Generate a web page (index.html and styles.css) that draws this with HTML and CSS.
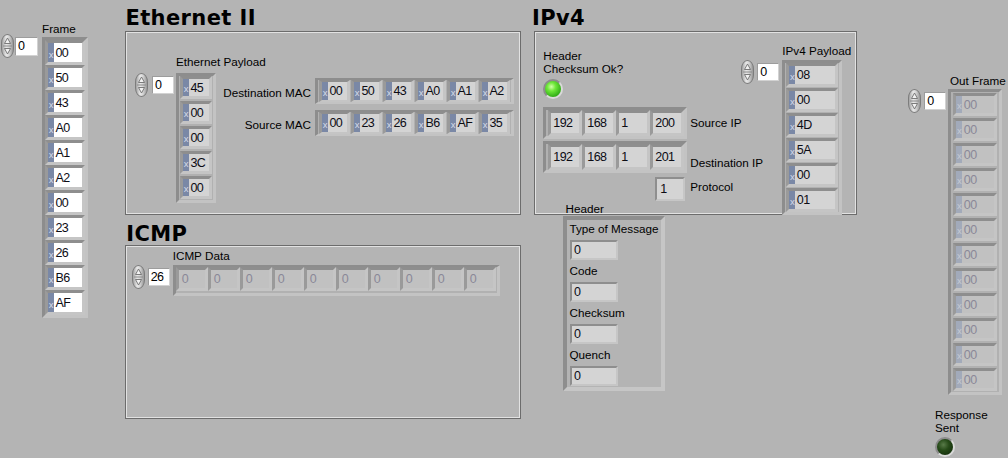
FILE: index.html
```html
<!DOCTYPE html>
<html>
<head>
<meta charset="utf-8">
<link rel="stylesheet" href="styles.css">
</head>
<body>
<div class="panel">

  <!-- Frame array -->
  <div class="obj aobj frame-obj">
    <div class="lbl">Frame</div>
    <div class="idx">
      <div class="spin"><svg width="11" height="22" viewBox="0 0 11 22"><path d="M5.5 3 8.5 8.5H2.5Z" fill="#f2f2f2" stroke="#6e6e6e" stroke-width=".9" stroke-linejoin="round"/><path d="M1 11H10" stroke="#8c8c8c"/><path d="M5.5 19 8.5 13.5H2.5Z" fill="#f2f2f2" stroke="#6e6e6e" stroke-width=".9" stroke-linejoin="round"/></svg></div>
      <div class="ibox">0</div>
    </div>
    <div class="arr v a-frame">
      <div class="slot"><div class="cell ctl"><span class="x">x</span><span class="val">00</span></div></div>
      <div class="slot"><div class="cell ctl"><span class="x">x</span><span class="val">50</span></div></div>
      <div class="slot"><div class="cell ctl"><span class="x">x</span><span class="val">43</span></div></div>
      <div class="slot"><div class="cell ctl"><span class="x">x</span><span class="val">A0</span></div></div>
      <div class="slot"><div class="cell ctl"><span class="x">x</span><span class="val">A1</span></div></div>
      <div class="slot"><div class="cell ctl"><span class="x">x</span><span class="val">A2</span></div></div>
      <div class="slot"><div class="cell ctl"><span class="x">x</span><span class="val">00</span></div></div>
      <div class="slot"><div class="cell ctl"><span class="x">x</span><span class="val">23</span></div></div>
      <div class="slot"><div class="cell ctl"><span class="x">x</span><span class="val">26</span></div></div>
      <div class="slot"><div class="cell ctl"><span class="x">x</span><span class="val">B6</span></div></div>
      <div class="slot"><div class="cell ctl"><span class="x">x</span><span class="val">AF</span></div></div>
    </div>
  </div>

  <!-- Ethernet II -->
  <div class="title t-eth">Ethernet II</div>
  <div class="box eth">
    <div class="aobj epay">
      <div class="lbl">Ethernet Payload</div>
      <div class="idx">
        <div class="spin"><svg width="11" height="22" viewBox="0 0 11 22"><path d="M5.5 3 8.5 8.5H2.5Z" fill="#f2f2f2" stroke="#6e6e6e" stroke-width=".9" stroke-linejoin="round"/><path d="M1 11H10" stroke="#8c8c8c"/><path d="M5.5 19 8.5 13.5H2.5Z" fill="#f2f2f2" stroke="#6e6e6e" stroke-width=".9" stroke-linejoin="round"/></svg></div>
        <div class="ibox">0</div>
      </div>
      <div class="arr v a-epay">
        <div class="slot"><div class="cell"><span class="x">x</span><span class="val">45</span></div></div>
        <div class="slot"><div class="cell"><span class="x">x</span><span class="val">00</span></div></div>
        <div class="slot"><div class="cell"><span class="x">x</span><span class="val">00</span></div></div>
        <div class="slot"><div class="cell"><span class="x">x</span><span class="val">3C</span></div></div>
        <div class="slot"><div class="cell"><span class="x">x</span><span class="val">00</span></div></div>
      </div>
    </div>
    <div class="macgrid">
      <div class="lbl mlbl">Destination MAC</div>
      <div class="arr a-mac">
        <div class="slot"><div class="cell"><span class="x">x</span><span class="val">00</span></div></div>
        <div class="slot"><div class="cell"><span class="x">x</span><span class="val">50</span></div></div>
        <div class="slot"><div class="cell"><span class="x">x</span><span class="val">43</span></div></div>
        <div class="slot"><div class="cell"><span class="x">x</span><span class="val">A0</span></div></div>
        <div class="slot"><div class="cell"><span class="x">x</span><span class="val">A1</span></div></div>
        <div class="slot"><div class="cell"><span class="x">x</span><span class="val">A2</span></div></div>
      </div>
      <div class="lbl mlbl">Source MAC</div>
      <div class="arr a-mac">
        <div class="slot"><div class="cell"><span class="x">x</span><span class="val">00</span></div></div>
        <div class="slot"><div class="cell"><span class="x">x</span><span class="val">23</span></div></div>
        <div class="slot"><div class="cell"><span class="x">x</span><span class="val">26</span></div></div>
        <div class="slot"><div class="cell"><span class="x">x</span><span class="val">B6</span></div></div>
        <div class="slot"><div class="cell"><span class="x">x</span><span class="val">AF</span></div></div>
        <div class="slot"><div class="cell"><span class="x">x</span><span class="val">35</span></div></div>
      </div>
    </div>
  </div>

  <!-- ICMP -->
  <div class="title t-icmp">ICMP</div>
  <div class="box icmp">
    <div class="aobj idata">
      <div class="lbl">ICMP Data</div>
      <div class="idx">
        <div class="spin"><svg width="11" height="22" viewBox="0 0 11 22"><path d="M5.5 3 8.5 8.5H2.5Z" fill="#f2f2f2" stroke="#6e6e6e" stroke-width=".9" stroke-linejoin="round"/><path d="M1 11H10" stroke="#8c8c8c"/><path d="M5.5 19 8.5 13.5H2.5Z" fill="#f2f2f2" stroke="#6e6e6e" stroke-width=".9" stroke-linejoin="round"/></svg></div>
        <div class="ibox">26</div>
      </div>
      <div class="arr a-icmp">
        <div class="slot"><div class="cell dis"><span class="val">0</span></div></div>
        <div class="slot"><div class="cell dis"><span class="val">0</span></div></div>
        <div class="slot"><div class="cell dis"><span class="val">0</span></div></div>
        <div class="slot"><div class="cell dis"><span class="val">0</span></div></div>
        <div class="slot"><div class="cell dis"><span class="val">0</span></div></div>
        <div class="slot"><div class="cell dis"><span class="val">0</span></div></div>
        <div class="slot"><div class="cell dis"><span class="val">0</span></div></div>
        <div class="slot"><div class="cell dis"><span class="val">0</span></div></div>
        <div class="slot"><div class="cell dis"><span class="val">0</span></div></div>
        <div class="slot"><div class="cell dis"><span class="val">0</span></div></div>
      </div>
    </div>
  </div>

  <!-- IPv4 -->
  <div class="title t-ipv4">IPv4</div>
  <div class="box ipv4">
    <div class="chk">
      <div class="lbl two">Header<br>Checksum Ok?</div>
      <div class="led on"></div>
    </div>
    <div class="iprows">
      <div class="arr a-ip">
        <div class="slot"><div class="cell"><span class="val">192</span></div></div>
        <div class="slot"><div class="cell"><span class="val">168</span></div></div>
        <div class="slot"><div class="cell"><span class="val">1</span></div></div>
        <div class="slot"><div class="cell"><span class="val">200</span></div></div>
      </div>
      <div class="lbl l-src">Source IP</div>
      <div class="arr a-ip">
        <div class="slot"><div class="cell"><span class="val">192</span></div></div>
        <div class="slot"><div class="cell"><span class="val">168</span></div></div>
        <div class="slot"><div class="cell"><span class="val">1</span></div></div>
        <div class="slot"><div class="cell"><span class="val">201</span></div></div>
      </div>
      <div class="lbl l-dst">Destination IP</div>
      <div class="nbox proto">1</div>
      <div class="lbl l-proto">Protocol</div>
    </div>
    <div class="aobj ipay">
      <div class="lbl">IPv4 Payload</div>
      <div class="idx">
        <div class="spin"><svg width="11" height="22" viewBox="0 0 11 22"><path d="M5.5 3 8.5 8.5H2.5Z" fill="#f2f2f2" stroke="#6e6e6e" stroke-width=".9" stroke-linejoin="round"/><path d="M1 11H10" stroke="#8c8c8c"/><path d="M5.5 19 8.5 13.5H2.5Z" fill="#f2f2f2" stroke="#6e6e6e" stroke-width=".9" stroke-linejoin="round"/></svg></div>
        <div class="ibox">0</div>
      </div>
      <div class="arr v a-ipay">
        <div class="slot"><div class="cell"><span class="x">x</span><span class="val">08</span></div></div>
        <div class="slot"><div class="cell"><span class="x">x</span><span class="val">00</span></div></div>
        <div class="slot"><div class="cell"><span class="x">x</span><span class="val">4D</span></div></div>
        <div class="slot"><div class="cell"><span class="x">x</span><span class="val">5A</span></div></div>
        <div class="slot"><div class="cell"><span class="x">x</span><span class="val">00</span></div></div>
        <div class="slot"><div class="cell"><span class="x">x</span><span class="val">01</span></div></div>
      </div>
    </div>
  </div>

  <!-- ICMP Header cluster -->
  <div class="obj hdr-obj">
    <div class="lbl hdr-lbl">Header</div>
    <div class="hclu">
      <div class="lbl">Type of Message</div>
      <div class="nbox">0</div>
      <div class="lbl">Code</div>
      <div class="nbox">0</div>
      <div class="lbl">Checksum</div>
      <div class="nbox">0</div>
      <div class="lbl">Quench</div>
      <div class="nbox">0</div>
    </div>
  </div>

  <!-- Out Frame -->
  <div class="obj aobj out-obj">
    <div class="lbl">Out Frame</div>
    <div class="idx">
      <div class="spin"><svg width="11" height="22" viewBox="0 0 11 22"><path d="M5.5 3 8.5 8.5H2.5Z" fill="#f2f2f2" stroke="#6e6e6e" stroke-width=".9" stroke-linejoin="round"/><path d="M1 11H10" stroke="#8c8c8c"/><path d="M5.5 19 8.5 13.5H2.5Z" fill="#f2f2f2" stroke="#6e6e6e" stroke-width=".9" stroke-linejoin="round"/></svg></div>
      <div class="ibox">0</div>
    </div>
    <div class="arr v a-out">
      <div class="slot"><div class="cell dis"><span class="x">x</span><span class="val">00</span></div></div>
      <div class="slot"><div class="cell dis"><span class="x">x</span><span class="val">00</span></div></div>
      <div class="slot"><div class="cell dis"><span class="x">x</span><span class="val">00</span></div></div>
      <div class="slot"><div class="cell dis"><span class="x">x</span><span class="val">00</span></div></div>
      <div class="slot"><div class="cell dis"><span class="x">x</span><span class="val">00</span></div></div>
      <div class="slot"><div class="cell dis"><span class="x">x</span><span class="val">00</span></div></div>
      <div class="slot"><div class="cell dis"><span class="x">x</span><span class="val">00</span></div></div>
      <div class="slot"><div class="cell dis"><span class="x">x</span><span class="val">00</span></div></div>
      <div class="slot"><div class="cell dis"><span class="x">x</span><span class="val">00</span></div></div>
      <div class="slot"><div class="cell dis"><span class="x">x</span><span class="val">00</span></div></div>
      <div class="slot"><div class="cell dis"><span class="x">x</span><span class="val">00</span></div></div>
      <div class="slot"><div class="cell dis"><span class="x">x</span><span class="val">00</span></div></div>
    </div>
  </div>

  <!-- Response Sent -->
  <div class="obj resp-obj">
    <div class="lbl two">Response<br>Sent</div>
    <div class="led off"></div>
  </div>

</div>
</body>
</html>
```

FILE: styles.css
```css
* { box-sizing: border-box; }

body {
  margin: 0;
  background: #b4b4b4;
  font-family: "Liberation Sans", Arial, sans-serif;
  font-size: 11.7px;
  color: #000;
}

.panel {
  position: relative;
  width: 1008px;
  height: 458px;
  overflow: hidden;
  background: #b4b4b4;
}

.obj { position: absolute; }

.lbl {
  line-height: 14px;
  white-space: nowrap;
  font-size: 11.7px;
}
.lbl.two { line-height: 13.3px; }

.title {
  position: absolute;
  font-family: "DejaVu Sans", sans-serif;
  font-weight: bold;
  font-size: 21px;
  line-height: 24px;
  letter-spacing: 0.4px;
  white-space: nowrap;
}
.t-eth { left: 125.4px; top: 6px; }
.t-ipv4 { left: 532px; top: 6px; }
.t-icmp { left: 126.3px; top: 222px; }

.box {
  position: absolute;
  border: 1px solid #6c6c6c;
  box-shadow: inset 0 0 0 1px #e2e2e2;
}

/* spinner + index */
.idx {
  display: flex;
  align-items: center;
  gap: 3px;
}
.spin {
  width: 13px;
  height: 24px;
  border: 1px solid #7c7c7c;
  border-radius: 6.5px / 9px;
  background: linear-gradient(90deg, #a2a2a2 0%, #e8e8e8 38%, #d6d6d6 62%, #989898 100%);
  display: flex;
  flex: none;
}
.spin svg { display: block; }
.ibox {
  width: 22px;
  height: 18px;
  background: #fff;
  border: 1px solid;
  border-color: #9c9c9c #d2d2d2 #d2d2d2 #9c9c9c;
  font-size: 12.5px;
  line-height: 16px;
  padding-left: 2px;
  letter-spacing: -0.6px;
}

/* array object: label over array, index at left */
.aobj {
  display: grid;
  grid-template-columns: 41px auto;
  grid-template-rows: 14px auto;
  row-gap: 2px;
}
.aobj > .lbl { grid-column: 2; grid-row: 1; width: 0; overflow: visible; }
.aobj > .idx { grid-column: 1; grid-row: 2; align-self: start; }
.aobj > .arr { grid-column: 2; grid-row: 2; justify-self: start; align-self: start; }

/* arrays */
.arr {
  display: flex;
  border: 3px solid;
  border-color: #8d8d8d #c3c3c3 #c3c3c3 #8d8d8d;
  background: #b1b1b1;
}
.arr.v { flex-direction: column; }
.slot {
  border: 3px solid;
  border-color: #8e8e8e #c5c5c5 #c5c5c5 #9a9a9a;
}
.cell {
  display: flex;
  height: 18px;
  font-size: 12.5px;
  letter-spacing: -0.6px;
}
.cell .x {
  width: 6px;
  flex: none;
  background: #7a88a6;
  color: #d6dbe8;
  font-size: 9.5px;
  letter-spacing: 0;
  display: flex;
  align-items: flex-end;
  justify-content: center;
  padding-bottom: 3px;
  line-height: 1;
}
.cell .val {
  flex: 1;
  background: #d4d4d4;
  padding-left: 1.5px;
  display: flex;
  align-items: center;
  color: #0c0c14;
}
.cell.ctl .val { background: #fff; }
.cell.dis .val { background: #c1c1c1; color: #8a8898; }
.cell.dis .x { background: #a2aaba; color: #c6cad4; }

.a-frame .cell { width: 34px; height: 19px; }

.a-epay { gap: 2px; padding: 0 1px 1px; }
.a-epay .cell { width: 26px; height: 17px; }

.a-ipay { gap: 1px; padding: 0 1px; }
.a-ipay .cell { width: 46px; height: 18px; }

.a-out { gap: 2px; padding: 1px 2px; }
.a-out .cell { width: 38px; height: 17px; }

.a-mac { border-width: 2px 3px; gap: 1px; padding: 0 1px; }
.a-mac .slot { border-width: 2px 3px; }
.a-mac .cell { width: 25px; height: 18px; }

.a-ip { padding-left: 2px; }
.a-ip .cell { width: 28px; height: 20px; }
.a-ip .cell .val { padding-left: 2px; }

.a-icmp { border-width: 2px 3px 3px 3px; padding: 0 1px 2px 0; }
.a-icmp .cell { width: 26px; height: 18px; }
.a-icmp .cell .val { padding-left: 3px; }

/* numeric boxes */
.nbox {
  width: 48px;
  height: 20px;
  border: 2px solid;
  border-color: #8e8e8e #c6c6c6 #c6c6c6 #8e8e8e;
  background: #d4d4d4;
  padding-left: 2px;
  font-size: 12.5px;
  line-height: 16px;
  color: #0c0c14;
}

/* LEDs */
.led {
  width: 20px;
  height: 20px;
  border-radius: 50%;
  border: 2px solid;
  border-color: #8c8c8c #dadada #dadada #8c8c8c;
}
.led.on {
  background: radial-gradient(circle at 40% 36%, #d2ffa8 0, #6fe83a 30%, #34b018 70%, #1f7c10 100%);
}
.led.off {
  background: radial-gradient(circle at 40% 36%, #587a48 0, #264a18 40%, #14300c 80%, #0c1e06 100%);
}

/* Frame object */
.frame-obj { left: 1px; top: 21.5px; row-gap: 1.5px; }
.frame-obj .idx { gap: 1px; margin-top: -3px; }
.frame-obj .ibox { width: 23px; height: 19px; }

/* Ethernet II cluster */
.eth {
  left: 125px;
  top: 31px;
  width: 396px;
  height: 184px;
  display: flex;
  align-items: flex-start;
  padding: 23.3px 0 0 9px;
}
.epay { row-gap: 4px; }
.epay .idx { gap: 4px; }
.macgrid {
  display: grid;
  grid-template-columns: 94px auto;
  column-gap: 4px;
  row-gap: 6px;
  margin: 23px 0 0 1px;
}
.mlbl { justify-self: end; align-self: start; margin-top: 8px; }

/* ICMP cluster */
.icmp {
  left: 125px;
  top: 245px;
  width: 396px;
  height: 174px;
  padding: 3.1px 0 0 5.7px;
}

/* IPv4 cluster */
.ipv4 {
  left: 534px;
  top: 31px;
  width: 323px;
  height: 184px;
  display: grid;
  grid-template-columns: 198px auto;
  grid-template-rows: auto 1fr;
  padding: 12px 0 0 8.3px;
}
.chk { grid-column: 1; grid-row: 1; margin-top: 5px; }
.chk .led { margin-top: 3.5px; }
.iprows {
  grid-column: 1 / 3;
  grid-row: 2;
  align-self: start;
  margin-top: 7.5px;
  display: grid;
  grid-template-columns: 144px auto;
  column-gap: 3px;
  row-gap: 2px;
  align-items: start;
}
.l-src { margin-top: 9.7px; }
.l-dst { margin-top: 15.4px; }
.proto { width: 30px; height: 24px; justify-self: end; margin: 2px 2px 0 0; line-height: 20px; padding-left: 3px; }
.l-proto { margin-top: 5px; }
.ipay { grid-column: 2; grid-row: 1 / 3; align-self: start; justify-self: start; }

/* ICMP Header cluster */
.hdr-obj { left: 563px; top: 202.4px; }
.hdr-lbl { margin-left: 2.5px; }
.hclu {
  width: 102px;
  height: 175px;
  border: 4px solid;
  border-color: #8e8e8e #c6c6c6 #c6c6c6 #8e8e8e;
  padding: 1.5px 0 0 2.5px;
  display: flex;
  flex-direction: column;
  align-items: flex-start;
}
.hclu .lbl { margin-bottom: 4px; }
.hclu .nbox { margin-bottom: 4px; margin-left: 0.5px; }

/* Out Frame */
.out-obj { left: 908.3px; top: 74px; grid-template-columns: 40px auto; row-gap: 1.3px; }
.out-obj > .lbl { margin-left: 1.7px; }

/* Response Sent */
.resp-obj { left: 935px; top: 408px; }
.resp-obj .led { margin-top: 2px; }
```
